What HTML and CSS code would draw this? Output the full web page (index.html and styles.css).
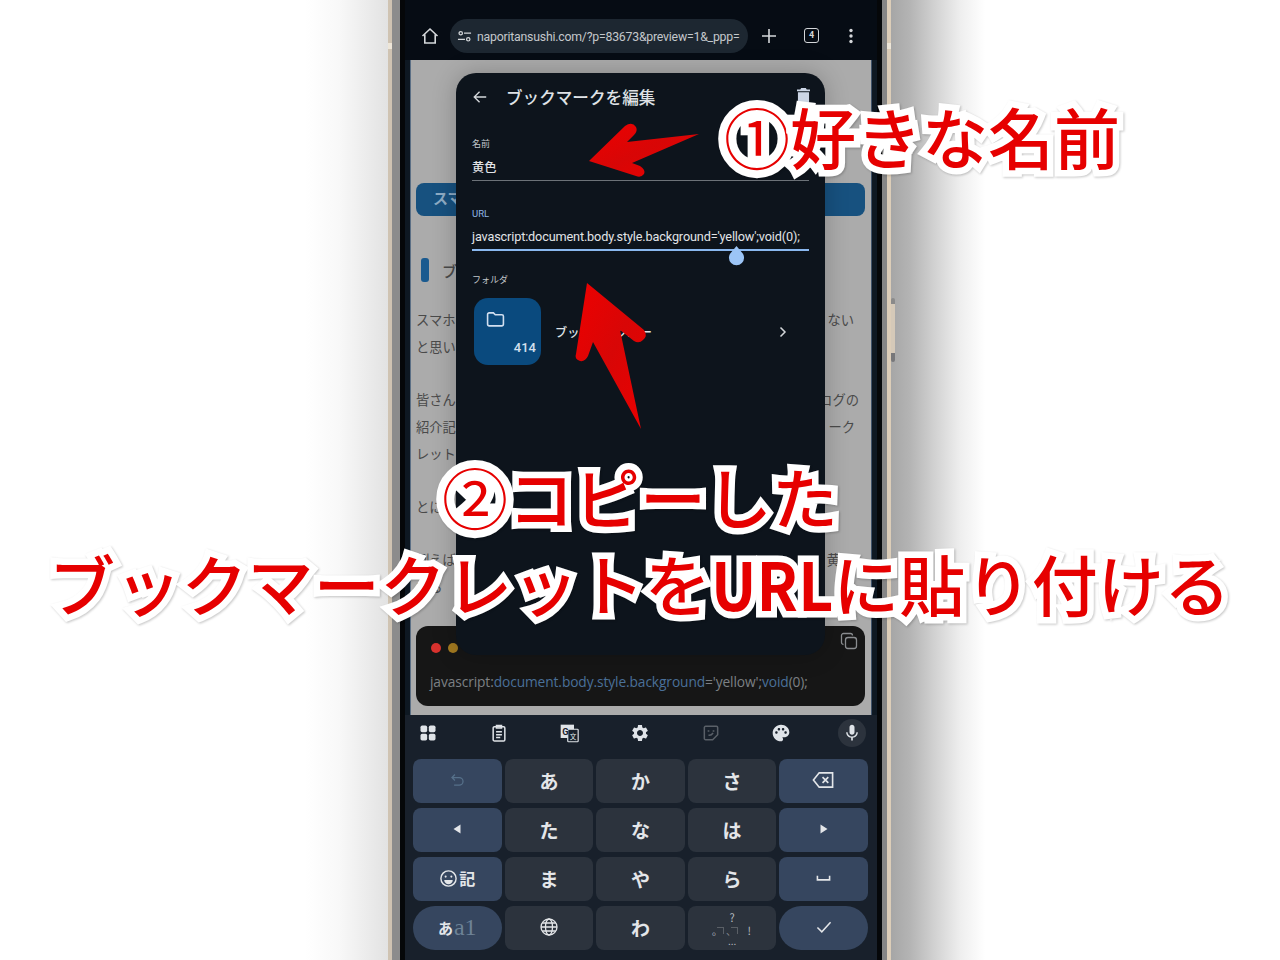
FILE: index.html
```html
<!DOCTYPE html>
<html lang="ja">
<head>
<meta charset="utf-8">
<title>ブックマークを編集</title>
<link rel="stylesheet" href="styles.css">
</head>
<body>
<div class="stage">
  <div class="phone">
    <i class="band band-l"></i><i class="band band-r"></i><i class="side-btn"></i>
    <div class="frame">
      <div class="screen">
        <header class="topbar">
          <svg class="ico home" viewBox="0 0 20 20"><path d="M2.500 10 10 3l7.500 7M4.800 8.500V17h10.400V8.500"/></svg>
          <div class="pill">
            <svg class="ico tune" viewBox="0 0 16 16"><circle cx="4" cy="4.500" r="1.800"/><path d="M7.500 4.500H15M1 11h7.500"/><circle cx="12" cy="11" r="1.800"/></svg>
            <span class="url">naporitansushi.com/?p=83673&amp;preview=1&amp;_ppp=</span>
          </div>
          <svg class="ico plus" viewBox="0 0 20 20"><path d="M10 3v14M3 10h14"/></svg>
          <div class="tabs">4</div>
          <svg class="kebab" viewBox="0 0 20 20"><circle cx="10" cy="4.500" r="1.700"/><circle cx="10" cy="10" r="1.700"/><circle cx="10" cy="15.500" r="1.700"/></svg>
        </header>

        <main class="page">
          <div class="bar">スマ</div>
          <div class="heading"><i class="mark"></i><span>ブ</span></div>
          <div class="para">
            <div class="line pr-a"><span>スマホ</span><span>ない</span></div>
            <div class="line"><span>と思い</span></div>
          </div>
          <div class="para">
            <div class="line pr-b"><span>皆さん</span><span>ログの</span></div>
            <div class="line pr-c"><span>紹介記</span><span>ーク</span></div>
            <div class="line"><span>レット</span></div>
          </div>
          <div class="para"><div class="line"><span>とに</span></div></div>
          <div class="para">
            <div class="line pr-d"><span>例えば</span><span>黄</span></div>
            <div class="line"><span>する</span></div>
          </div>
          <div class="code">
            <div class="dots"><i class="dot red"></i><i class="dot amber"></i></div>
            <svg class="copy" viewBox="0 0 18 18"><rect x="5.500" y="5.500" width="11" height="11" rx="2.500"/><path d="M3.500 12.500A2 2 0 0 1 1.500 10.500V3.500A2 2 0 0 1 3.500 1.500H10.500A2 2 0 0 1 12.500 3.500"/></svg>
            <code class="snippet">javascript:<span class="k">document.body.style.background</span>='yellow';<span class="k">void</span>(0);</code>
          </div>

          <section class="modal">
            <div class="m-head">
              <svg class="ico back" viewBox="0 0 18 18"><path d="M16 9H2.500M8.500 3l-6 6 6 6"/></svg>
              <h1>ブックマークを編集</h1>
              <svg class="trash" viewBox="0 0 14 16"><path d="M4.500 0h5l1 1.500H14V3.500H0V1.500h3.500zM1 4.500h12V16H1z"/></svg>
            </div>
            <label class="lbl l-name">名前</label>
            <div class="val v-name">黄色</div>
            <label class="lbl l-url">URL</label>
            <div class="val v-url">javascript:document.body.style.background='yellow';void(0);</div>
            <svg class="handle" viewBox="0 0 18 22"><path d="M9 0 14.500 6.500A8 8 0 1 1 3.500 6.500Z"/></svg>
            <label class="lbl l-folder">フォルダ</label>
            <div class="folder-row">
              <div class="tile">
                <svg class="folder" viewBox="0 0 18 16"><path d="M1.500 3.200A1.500 1.500 0 0 1 3 1.700H7L8.800 3.500H15A1.500 1.500 0 0 1 16.500 5V12.500A1.500 1.500 0 0 1 15 14H3A1.500 1.500 0 0 1 1.500 12.500Z"/></svg>
                <span class="count">414</span>
              </div>
              <span class="f-name">ブックマークバー</span>
              <svg class="ico chev" viewBox="0 0 12 12"><path d="M3.500 1.500 8 6l-4.500 4.500"/></svg>
            </div>
          </section>
        </main>

        <section class="kbd">
          <div class="kbd-tools">
            <div class="tool"><svg class="fill" viewBox="0 0 24 24"><rect x="3" y="3" width="8" height="8" rx="2"/><rect x="13" y="3" width="8" height="8" rx="2"/><rect x="3" y="13" width="8" height="8" rx="2"/><rect x="13" y="13" width="8" height="8" rx="2"/></svg></div>
            <div class="tool"><svg class="line-i" viewBox="0 0 24 24"><rect x="5" y="4.500" width="14" height="17" rx="1.500"/><path d="M9 3h6v3H9zM8.500 10.500h7M8.500 14h7M8.500 17.500h5"/></svg></div>
            <div class="tool"><svg class="trans" viewBox="0 0 24 24"><path class="t-a" d="M2 2h16v16H2z"/><rect class="t-b" x="10.500" y="7.500" width="12.500" height="15" rx="1"/><text class="t-g" x="4" y="14">G</text><text class="t-k" x="13" y="19">文</text></svg></div>
            <div class="tool"><svg class="fill" viewBox="0 0 24 24"><path d="M19.140 12.940c.04-.3.06-.61.06-.94 0-.32-.02-.64-.07-.94l2.030-1.580c.18-.14.23-.41.12-.61l-1.920-3.320c-.12-.22-.37-.29-.59-.22l-2.390.96c-.5-.38-1.030-.7-1.620-.94l-.36-2.540c-.04-.24-.24-.41-.48-.41h-3.840c-.24 0-.43.17-.47.41l-.36 2.540c-.59.24-1.130.57-1.620.94l-2.390-.96c-.22-.08-.47 0-.59.22L2.740 8.870c-.12.21-.08.47.12.61l2.030 1.580c-.05.3-.09.63-.09.94s.02.64.07.94l-2.030 1.580c-.18.14-.23.41-.12.61l1.920 3.320c.12.22.37.29.59.22l2.390-.96c.5.38 1.030.7 1.620.94l.36 2.540c.05.24.24.41.48.41h3.840c.24 0 .44-.17.47-.41l.36-2.540c.59-.24 1.130-.56 1.620-.94l2.390.96c.22.08.47 0 .59-.22l1.920-3.320c.12-.22.07-.47-.12-.61l-2.010-1.580zM12 15.600c-1.980 0-3.600-1.620-3.600-3.600s1.620-3.600 3.600-3.600 3.600 1.620 3.600 3.600-1.620 3.600-3.600 3.600z"/></svg></div>
            <div class="tool"><svg class="line-i dim" viewBox="0 0 24 24"><path d="M5.500 4h13A1.500 1.500 0 0 1 20 5.500V14l-6 6H5.500A1.500 1.500 0 0 1 4 18.500V5.500A1.500 1.500 0 0 1 5.500 4zM8 9.500h2M14 9.500h2M9 14.500c2 .5 4-.5 5.500-2.500"/></svg></div>
            <div class="tool"><svg class="fill" viewBox="0 0 24 24"><path fill-rule="evenodd" d="M12 2C6.490 2 2 6.490 2 12s4.490 10 10 10c1.380 0 2.500-1.120 2.500-2.500 0-.61-.23-1.200-.64-1.670-.08-.1-.13-.21-.13-.33 0-.28.22-.5.5-.5H16c3.310 0 6-2.690 6-6 0-4.960-4.490-9-10-9zm5.500 11c-.83 0-1.500-.67-1.500-1.500s.67-1.500 1.500-1.500 1.500.67 1.500 1.500-.67 1.500-1.500 1.500zm-3-4c-.83 0-1.500-.67-1.500-1.500S13.670 6 14.500 6s1.500.67 1.500 1.500S15.330 9 14.500 9zM5 11.500c0-.83.67-1.500 1.500-1.500s1.500.67 1.500 1.500S7.330 13 6.500 13 5 12.330 5 11.500zm6-4c0 .83-.67 1.500-1.500 1.500S8 8.330 8 7.500 8.670 6 9.500 6s1.500.67 1.500 1.500z"/></svg></div>
            <div class="tool mic"><svg class="fill" viewBox="0 0 24 24"><path d="M12 14c1.660 0 3-1.340 3-3V5c0-1.660-1.340-3-3-3S9 3.340 9 5v6c0 1.660 1.340 3 3 3zm5.300-3c0 3-2.540 5.100-5.300 5.100S6.700 14 6.700 11H5c0 3.410 2.720 6.230 6 6.720V21h2v-3.280c3.280-.48 6-3.300 6-6.720h-1.700z"/></svg></div>
          </div>
          <div class="keys">
            <div class="key acc"><svg class="k-ico undo" viewBox="0 0 20 20"><path d="M7 3 3.500 6.500 7 10M3.500 6.500H12a4.500 4.500 0 0 1 0 9H6"/></svg></div>
            <div class="key">あ</div><div class="key">か</div><div class="key">さ</div>
            <div class="key acc"><svg class="k-ico bksp" viewBox="0 0 24 20"><path d="M7.500 2.500H21.500V17.500H7.500L1.500 10ZM11 7l6 6M17 7l-6 6"/></svg></div>
            <div class="key acc"><svg class="k-fill" viewBox="0 0 10 12"><path d="M8.500 1.500V10.500L1.500 6Z"/></svg></div>
            <div class="key">た</div><div class="key">な</div><div class="key">は</div>
            <div class="key acc"><svg class="k-fill" viewBox="0 0 10 12"><path d="M1.500 1.500V10.500L8.500 6Z"/></svg></div>
            <div class="key acc emoji"><svg class="k-smile" viewBox="0 0 20 20"><circle cx="10" cy="10" r="8"/><circle class="eye" cx="7" cy="8" r="1.100"/><circle class="eye" cx="13" cy="8" r="1.100"/><path class="eye" d="M5.500 11.500h9a4.500 4.500 0 0 1-9 0z"/></svg><span>記</span></div>
            <div class="key">ま</div><div class="key">や</div><div class="key">ら</div>
            <div class="key acc"><svg class="k-ico space" viewBox="0 0 16 8"><path d="M1.500 1.500V6H14.500V1.500"/></svg></div>
            <div class="key acc round mode"><span class="m-a">あ</span><span class="m-b">a1</span></div>
            <div class="key"><svg class="k-ico globe" viewBox="0 0 20 20"><circle cx="10" cy="10" r="8"/><ellipse cx="10" cy="10" rx="3.500" ry="8"/><path d="M2 10h16M3.200 6h13.600M3.200 14h13.600"/></svg></div>
            <div class="key">わ</div>
            <div class="key punct">
              <span class="p-q">?</span>
              <span class="p-m"><span class="p-ring">。</span><i class="p-box"></i><span class="p-gap">、</span><i class="p-box"></i><span class="p-ex">!</span></span>
              <span class="p-d">...</span>
            </div>
            <div class="key acc round"><svg class="k-ico check" viewBox="0 0 20 16"><path d="M2.500 8.500 7.500 13.500 17.500 2.500"/></svg></div>
          </div>
        </section>
      </div>
    </div>
  </div>
</div>

<svg class="arrows" viewBox="0 0 1280 960" aria-hidden="true">
  <defs>
    <linearGradient id="redA" x1="0" y1="0" x2="1" y2="1"><stop offset="0" stop-color="#ee0000"/><stop offset=".5" stop-color="#d80606"/><stop offset="1" stop-color="#ea0000"/></linearGradient>
  </defs>
  <path fill="url(#redA)" d="M589 161 625 126Q632 121 636 127Q638 131 634 135L627 142 699 134 632 163 640 166Q646 170 644 174Q641 178 636 176Z"/>
  <path fill="url(#redA)" d="M587 283 644 330Q648 336 643 340Q639 344 634 341L620 330 641 429 593 342 588 356Q585 362 580 361Q574 359 576 354Z"/>
</svg>

<div class="note n1"><span class="circ">①</span>好きな名前</div>
<div class="note n2"><span class="circ">②</span>コピーした</div>
<div class="note n3">ブックマークレットを<b>URL</b>に貼り付ける</div>
</body>
</html>
```
FILE: styles.css
```css
* { box-sizing: border-box; }
html, body { margin: 0; padding: 0; }
body {
  width: 1280px;
  height: 960px;
  overflow: hidden;
  position: relative;
  background: #fff;
  font-family: "Noto Sans CJK JP", "Noto Sans", sans-serif;
}
.stage {
  height: 960px;
  padding-left: 388px;
  display: flex;
  background: linear-gradient(to right,
    #fff 305px, #f8f8f8 340px, #e2e2e2 388px,
    #a6a6a6 891px, #b4b4b4 910px, #d2d2d2 935px, #eeeeee 960px, #fff 985px);
}

/* device */
.phone {
  position: relative;
  width: 503px;
  height: 960px;
  border-left: 4px solid #cfc3b2;
  border-right: 4px solid #dccdb8;
}
.band { position: absolute; top: 43px; width: 4px; height: 6px; background: #eee6d8; }
.band-l { left: -4px; }
.band-r { right: -4px; }
.side-btn {
  position: absolute;
  top: 298px;
  right: -8px;
  width: 4px;
  height: 64px;
  border-radius: 2px;
  background: linear-gradient(#8a8a8a 0 10%, #d5c9b8 10% 86%, #77777a 86%);
}
.frame {
  height: 100%;
  background: #050709;
  border-left: 8px solid #8c8c8c;
  border-right: 5px solid #858585;
  padding: 0 5px;
}
.screen { height: 100%; display: flex; flex-direction: column; background: #0e1822; }

/* browser bar */
.topbar {
  height: 60px;
  flex: none;
  display: flex;
  align-items: flex-start;
  padding: 19px 0 0 15px;
  background: #060c14;
}
.ico { fill: none; stroke: #d4d7da; stroke-width: 1.600; }
.home { width: 20px; height: 20px; margin-top: 7px; }
.pill {
  width: 298px;
  height: 34px;
  margin-left: 10px;
  padding: 1px 6px 0 7px;
  display: flex;
  align-items: center;
  gap: 5px;
  border-radius: 17px;
  background: #1d2731;
  overflow: hidden;
}
.tune { width: 15px; height: 15px; flex: none; stroke-width: 1.300; }
.url {
  font-family: Roboto, sans-serif;
  font-size: 12.300px;
  letter-spacing: -.22px;
  color: #c4c8cc;
  white-space: nowrap;
}
.plus { width: 20px; height: 20px; margin: 7px 0 0 11px; }
.tabs {
  width: 15px;
  height: 15px;
  margin: 9px 0 0 25px;
  border: 1.500px solid #d4d7da;
  border-radius: 3px;
  font: 700 9px/12px Roboto, sans-serif;
  color: #d4d7da;
  text-align: center;
}
.kebab { width: 20px; height: 20px; margin: 7px 0 0 22px; fill: #d4d7da; }

/* web page */
.page {
  position: relative;
  flex: 1;
  min-height: 0;
  margin: 0 5px;
  padding: 123px 6px 0 5px;
  background: #ababab;
  border-left: 1px solid #5b6f85;
  border-right: 1px solid #3f5269;
  font-size: 13.300px;
  color: #4a4a4a;
}
.bar {
  height: 33px;
  padding-left: 17px;
  border-radius: 8px;
  background: #17517f;
  color: #8eacc5;
  font-size: 15px;
  font-weight: 700;
  line-height: 29px;
}
.heading { height: 24px; margin-top: 42px; display: flex; align-items: center; gap: 13px; padding-left: 5px; font-size: 15px; font-weight: 500; }
.mark { width: 8px; height: 24px; border-radius: 3px; background: #1a5a8f; }
.para { margin-top: 24px; }
.para + .para { margin-top: 26px; }
.line { height: 27px; display: flex; justify-content: space-between; line-height: 27px; }
.pr-a { padding-right: 11px; }
.pr-b { padding-right: 6px; }
.pr-c { padding-right: 10px; }
.pr-d { padding-right: 25px; }

.code {
  position: relative;
  height: 80px;
  margin-top: 26px;
  padding: 16px 14px 0;
  border-radius: 12px;
  background: #161616;
}
.dots { display: flex; gap: 7px; padding-left: 1px; padding-top: 1px; height: 32px; }
.dot { width: 10px; height: 10px; border-radius: 50%; }
.red { background: #d8322e; }
.amber { background: #a37a20; }
.copy {
  position: absolute;
  top: 6px;
  right: 7px;
  width: 18px;
  height: 18px;
  fill: none;
  stroke: #8a8d90;
  stroke-width: 1.300;
}
.snippet {
  display: block;
  font-family: "Open Sans", "Noto Sans", sans-serif;
  font-size: 13.750px;
  line-height: 16px;
  letter-spacing: -.1px;
  color: #7c8084;
  white-space: nowrap;
}
.k { color: #4a7099; }

/* dialog */
.modal {
  position: absolute;
  top: 13px;
  left: 45px;
  width: 369px;
  height: 582px;
  padding: 0 16px;
  border-radius: 20px;
  background: #0d141c;
  box-shadow: 0 0 24px rgba(0, 0, 0, .22);
  color: #e2e4e8;
}
.m-head { height: 48px; display: flex; align-items: center; position: relative; }
.back { width: 16px; height: 16px; stroke-width: 1.500; }
.m-head h1 { margin: 0 0 0 18px; font-size: 16.600px; font-weight: 500; line-height: 48px; color: #dfe2e6; }
.trash { position: absolute; right: -1px; top: 15px; width: 13px; height: 15px; fill: #ccd6e6; }
.lbl { display: block; font-size: 9px; line-height: 14px; color: #c2c6cb; }
.l-name { margin-top: 16px; }
.val { font-weight: 500; color: #e2e4e8; }
.v-name { height: 27px; margin-top: 3px; padding-top: 4px; font-size: 12.200px; line-height: 18px; border-bottom: 1px solid #6c7278; }
.l-url { margin-top: 26px; color: #8fb6e6; font-size: 9.500px; font-family: Roboto, sans-serif; }
.v-url {
  height: 25px;
  margin-top: 5px;
  font-family: Roboto, sans-serif;
  font-weight: 400;
  font-size: 12.700px;
  letter-spacing: -.15px;
  line-height: 21px;
  white-space: nowrap;
  border-bottom: 2px solid #8ab8ef;
}
.handle { position: absolute; top: 173px; left: 272px; width: 17px; height: 21px; fill: #9cc5f6; }
.l-folder { margin-top: 22px; }
.folder-row { display: flex; align-items: center; margin: 11px 0 0 2px; position: relative; }
.tile { position: relative; width: 67px; height: 67px; border-radius: 14px; background: #0a4a7e; flex: none; }
.folder { position: absolute; left: 12px; top: 13px; width: 19px; height: 17px; fill: none; stroke: #d2dff0; stroke-width: 1.500; }
.count { position: absolute; right: 5px; bottom: 9px; font: 500 13px/16px Roboto, sans-serif; color: #d4e0ee; }
.f-name { margin-left: 14px; font-size: 12.200px; font-weight: 500; color: #dfe2e6; }
.chev { position: absolute; left: 303px; top: 28px; width: 12px; height: 12px; stroke-width: 1.500; }

/* keyboard */
.kbd { flex: none; height: 245px; background: #18202b; padding: 0 9px 0 8px; }
.kbd-tools { height: 44px; display: flex; justify-content: space-between; align-items: center; padding: 0 2px 8px 1px; }
.tool { width: 28px; height: 28px; display: flex; align-items: center; justify-content: center; border-radius: 50%; }
.tool svg { width: 20px; height: 20px; }
.fill { fill: #dfe3e8; }
.line-i { fill: none; stroke: #dfe3e8; stroke-width: 1.800; }
.line-i.dim { stroke: #5a6068; }
.mic { background: #2c333d; }
.t-a { fill: #dfe3e8; }
.t-b { fill: #18202b; stroke: #dfe3e8; stroke-width: 1.400; }
.t-g { font: 700 11px Roboto, sans-serif; fill: #18202b; }
.t-k { font-size: 8px; fill: #dfe3e8; }

.keys { display: grid; grid-template-columns: repeat(5, 1fr); grid-auto-rows: 44px; gap: 5px 3px; }
.key {
  display: flex;
  align-items: center;
  justify-content: center;
  padding-bottom: 2px;
  border-radius: 8px;
  background: #2c333d;
  font-size: 19px;
  font-weight: 700;
  color: #e4e6e9;
}
.acc { background: #36465f; }
.round { border-radius: 22px; }
.k-ico { width: 20px; height: 20px; fill: none; stroke: #e4e6e9; stroke-width: 1.700; }
.undo { width: 17px; height: 17px; stroke: #56708a; stroke-width: 1.500; }
.bksp { width: 23px; }
.k-fill { width: 10px; height: 12px; fill: #e4e6e9; }
.space { width: 15px; height: 8px; }
.globe { stroke-width: 1.300; }
.check { width: 18px; height: 14px; }
.emoji { gap: 1px; font-size: 16px; }
.k-smile { width: 19px; height: 19px; fill: none; stroke: #e4e6e9; stroke-width: 1.500; }
.eye { fill: #e4e6e9; stroke: none; }
.mode { gap: 1px; }
.m-a { font-size: 15px; }
.m-b { font-family: "Liberation Serif", serif; font-weight: 400; font-size: 24px; color: #6d8296; line-height: 1; }
.punct {
  flex-direction: column;
  padding: 0;
  font-size: 11px;
  font-weight: 400;
  line-height: 13px;
  color: #b6bac0;
}
.p-m { display: flex; align-items: center; font-size: 10px; width: 38px; }
.p-ring { width: 6px; margin-left: -1px; }
.p-gap { width: 6px; margin-left: 2px; color: #8a8f96; }
.p-box { width: 7px; height: 7px; margin-left: -1px; border-top: 1px solid #5a5f66; border-right: 1px solid #5a5f66; }
.p-ex { margin-left: auto; font-size: 11px; }
.p-d { font-size: 10px; line-height: 8px; }

/* annotations */
.arrows { position: absolute; left: 0; top: 0; width: 1280px; height: 960px; pointer-events: none; }
.note {
  position: absolute;
  white-space: nowrap;
  font-size: 66px;
  line-height: 80px;
  font-weight: 500;
  color: #e60000;
  -webkit-text-stroke: 13px #fff;
  paint-order: stroke fill;
  filter: drop-shadow(1px 1px 1px rgba(0, 0, 0, .22));
}
.circ { font-weight: 400; -webkit-text-stroke-width: 16px; }
.note b {
  display: inline-block;
  font-weight: 700;
  transform: scaleX(.92);
  transform-origin: left center;
  margin-right: -11px;
}
.n1 { left: 724px; top: 95px; }
.n2 { left: 442px; top: 455px; }
.n3 { left: 49px; top: 542px; letter-spacing: .2px; }
```
